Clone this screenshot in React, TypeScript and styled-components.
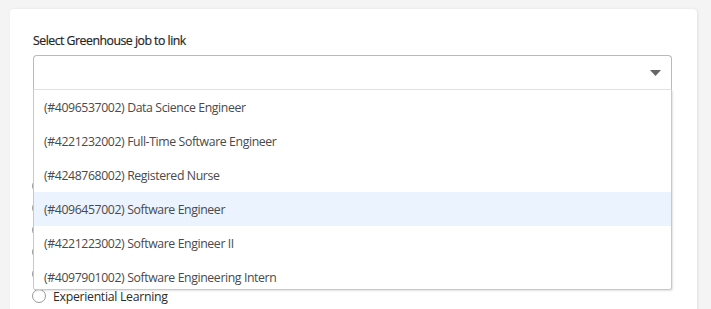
import React from 'react';
import styled, { createGlobalStyle } from 'styled-components';

const jobs = [
    { id: '4096537002', title: 'Data Science Engineer' },
    { id: '4221232002', title: 'Full-Time Software Engineer' },
    { id: '4248768002', title: 'Registered Nurse' },
    { id: '4096457002', title: 'Software Engineer' },
    { id: '4221223002', title: 'Software Engineer II' },
    { id: '4097901002', title: 'Software Engineering Intern' },
];

// radios behind the open menu: only their edges show
const hiddenRadios = 5;

const GlobalStyle = createGlobalStyle`
    html, body {
        margin: 0;
        padding: 0;
        background: #f4f4f4;
        font-family: 'Open Sans', 'Noto Sans', sans-serif;
    }
`;

const Page = styled.div`
    width: 711px;
    height: 309px;
    overflow: hidden;
    padding: 9px 0 0 10px;
    box-sizing: border-box;
`;

const Card = styled.div`
    width: 687px;
    height: 320px;
    background: #fff;
    border-radius: 4px;
    box-shadow: 1px 0 3px rgba(0, 0, 0, 0.08);
    padding: 23px 25px 0 23px;
    box-sizing: border-box;
`;

const Label = styled.div`
    font-size: 12.3px;
    font-weight: 500;
    letter-spacing: -0.5px;
    color: #262626;
    line-height: 18px;
    margin-bottom: 5px;
    -webkit-text-stroke: 0.2px #262626;
`;

const SelectWrap = styled.div`
    position: relative;
    width: 639px;
`;

const Control = styled.div`
    height: 35px;
    border: 1px solid #b9b9b9;
    border-bottom-color: #e2e2e2;
    border-radius: 4px 4px 0 0;
    box-sizing: border-box;
    display: flex;
    align-items: center;
    justify-content: flex-end;
    padding-right: 10px;
`;

const Menu = styled.div`
    position: absolute;
    top: 35px;
    left: 0;
    right: 0;
    height: 199px;
    overflow: hidden;
    background: #fff;
    border: 1px solid #c8c8c8;
    border-top: none;
    border-radius: 0 0 3px 3px;
    box-shadow: 1px 1px 2px rgba(0, 0, 0, 0.12);
    z-index: 2;
`;

const Option = styled.div<{ $active?: boolean }>`
    height: 34px;
    display: flex;
    align-items: center;
    padding-left: 10px;
    font-size: 12.3px;
    letter-spacing: -0.4px;
    color: #4a4a4a;
    background: ${({ $active }) => ($active ? '#ebf3fe' : '#fff')};
`;

const RadioList = styled.div`
    display: flex;
    flex-direction: column;
    gap: 6px;
    margin-top: 88px;
    margin-left: -1px;
`;

const RadioRow = styled.label`
    display: flex;
    align-items: center;
    gap: 7px;
    height: 16px;
    font-size: 12.3px;
    letter-spacing: -0.3px;
    color: #2b2b2b;
`;

const RadioCircle = styled.span`
    width: 14px;
    height: 14px;
    border-radius: 50%;
    border: 1px solid #9a9a9a;
    box-sizing: border-box;
    background: #fff;
`;

const App: React.FC = () => (
    <Page>
        <GlobalStyle />
        <Card>
            <Label>Select Greenhouse job to link</Label>
            <SelectWrap>
                <Control>
                    <svg width="11" height="6" viewBox="0 0 11 6">
                        <path d="M0 0 H11 L5.5 6 Z" fill="#666" />
                    </svg>
                </Control>
                <Menu>
                    {jobs.map((job, i) => (
                        <Option key={job.id} $active={i === 3}>
                            (#{job.id}) {job.title}
                        </Option>
                    ))}
                </Menu>
                <RadioList>
                    {Array.from({ length: hiddenRadios }, (_, i) => (
                        <RadioRow key={i}>
                            <RadioCircle />
                        </RadioRow>
                    ))}
                    <RadioRow>
                        <RadioCircle />
                        Experiential Learning
                    </RadioRow>
                </RadioList>
            </SelectWrap>
        </Card>
    </Page>
);

export default App;
